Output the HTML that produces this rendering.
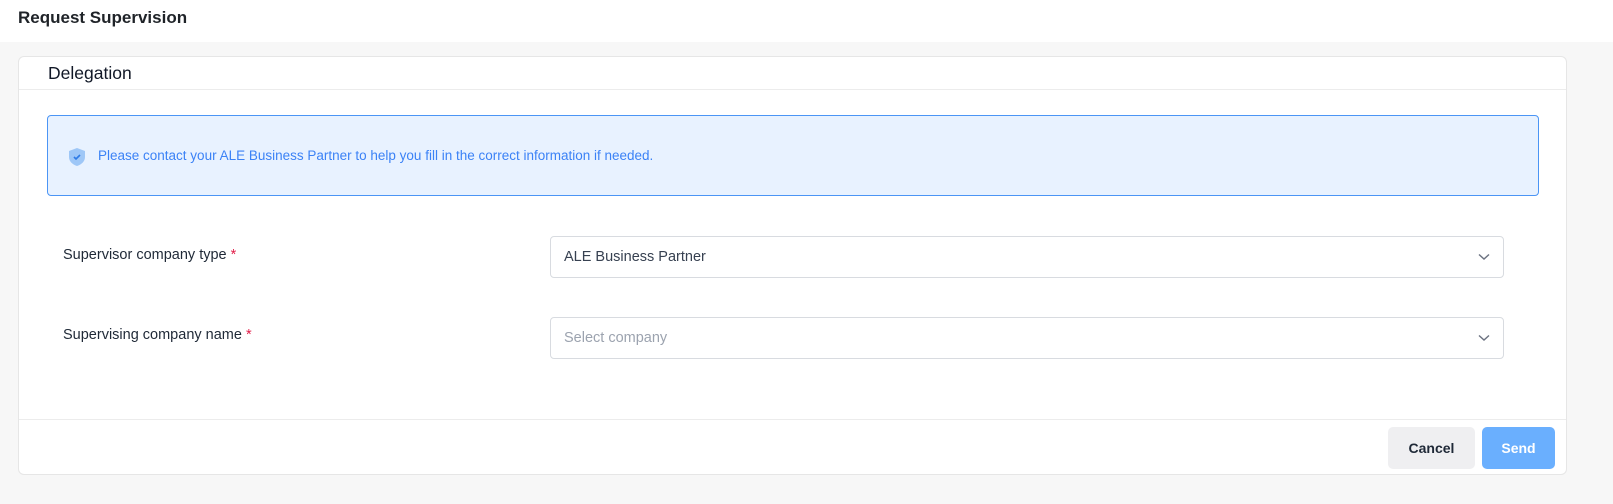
<!DOCTYPE html>
<html><head><style>
*{box-sizing:border-box;margin:0;padding:0}
body{width:1613px;height:504px;background:#f7f7f7;font-family:"Liberation Sans",sans-serif;position:relative;overflow:hidden}
.top{position:absolute;left:0;top:0;width:1613px;height:42px;background:#fff}
.top h1{position:absolute;left:18px;top:8px;font-size:17px;font-weight:bold;color:#1f2328}
.card{position:absolute;left:18px;top:56px;width:1549px;height:419px;background:#fff;border:1px solid #e6e6e6;border-radius:6px}
.ch{position:absolute;left:0;top:0;width:100%;height:33px;border-bottom:1px solid #ececec}
.ch span{position:absolute;left:29px;top:6px;font-size:17.5px;color:#111827}
.alert{position:absolute;left:28px;top:58px;width:1492px;height:81px;background:#e8f2ff;border:1px solid #4b95f5;border-radius:4px}
.alert svg{position:absolute;left:20px;top:31px}
.alert span{position:absolute;left:50px;top:32px;font-size:13.5px;color:#3b82f6}
.lbl{position:absolute;left:44px;font-size:14.5px;color:#1f2937}
.lbl b{color:#e11d48;font-weight:normal}
.sel{position:absolute;left:531px;width:954px;height:42px;border:1px solid #d8dbe0;border-radius:4px;font-size:14.5px}
.sel span{position:absolute;left:13px;top:12px}
.sel svg{position:absolute;right:13px;top:16px}
.ft{position:absolute;left:0;top:362px;width:100%;border-top:1px solid #ececec}
.btn{position:absolute;top:370px;height:42px;border-radius:5px;font-size:14px;font-weight:bold;text-align:center;line-height:42px}
</style></head><body>
<div class="top"><h1>Request Supervision</h1></div>
<div class="card">
 <div class="ch"><span>Delegation</span></div>
 <div class="alert">
  <svg width="18" height="20" viewBox="0 0 18 20"><path d="M9 1L17 4V10C17 14.5 13.5 17.5 9 19C4.5 17.5 1 14.5 1 10V4Z" fill="#9ec7f7"/><path d="M6 10L8 12L12 8" stroke="#2f7be6" stroke-width="1.6" fill="none"/></svg>
  <span>Please contact your ALE Business Partner to help you fill in the correct information if needed.</span>
 </div>
 <div class="lbl" style="top:190px">Supervisor company type <b>*</b></div>
 <div class="sel" style="top:179px;color:#374151"><span>ALE Business Partner</span><svg width="12" height="8" viewBox="0 0 12 8"><path d="M1 1.5L6 6L11 1.5" stroke="#6b7280" stroke-width="1.4" fill="none"/></svg></div>
 <div class="lbl" style="top:270px">Supervising company name <b>*</b></div>
 <div class="sel" style="top:260px;color:#9ca3af"><span>Select company</span><svg width="12" height="8" viewBox="0 0 12 8"><path d="M1 1.5L6 6L11 1.5" stroke="#6b7280" stroke-width="1.4" fill="none"/></svg></div>
 <div class="ft"></div>
 <div class="btn" style="left:1369px;width:87px;background:#efeff1;color:#1f2937">Cancel</div>
 <div class="btn" style="left:1463px;width:73px;background:#6aaffe;color:#fff">Send</div>
</div>
</body></html>
